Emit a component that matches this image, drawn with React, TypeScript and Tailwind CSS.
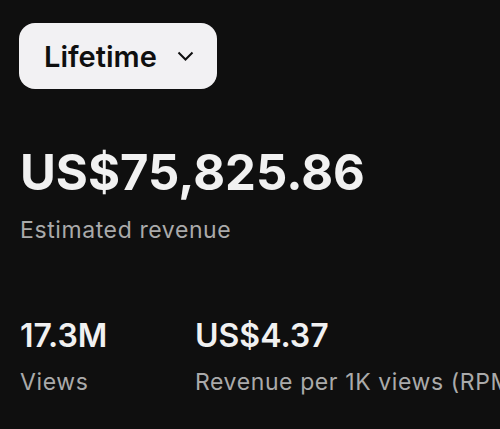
export default function App() {
  return (
    <div
      className="h-[429px] w-[500px] overflow-hidden bg-[#0f0f0f] px-[20px] pt-[23px] text-[#f1f1f1]"
      style={{ fontFamily: 'Inter, "Noto Sans", sans-serif' }}
    >
      <button className="-ml-px flex h-[66px] w-[198px] items-center rounded-[16px] bg-[#f2f1f3] pl-[25px] text-[#0f0f0f]">
        <span className="text-[29px] font-semibold leading-none">Lifetime</span>
        <svg
          className="ml-[20px]"
          width="17"
          height="11"
          viewBox="0 0 17 11"
          fill="none"
          stroke="#0f0f0f"
          strokeWidth="2"
        >
          <path d="M1.5 1.5 8.5 8.5 15.5 1.5" />
        </svg>
      </button>

      <div className="mt-[59px]">
        <div className="text-[49px] font-bold leading-none">US$75,825.86</div>
        <div className="mt-[22px] text-[23px] leading-none tracking-[0.6px] text-[#aaaaaa]">Estimated revenue</div>
      </div>

      <div className="mt-[78px] flex">
        <div className="w-[175px] shrink-0">
          <div className="text-[32px] font-semibold leading-none">17.3M</div>
          <div className="mt-[19px] text-[23px] leading-none tracking-[0.6px] text-[#aaaaaa]">Views</div>
        </div>
        <div className="whitespace-nowrap">
          <div className="text-[32px] font-semibold leading-none">US$4.37</div>
          <div className="mt-[19px] text-[23px] leading-none tracking-[0.6px] text-[#aaaaaa]">Revenue per 1K views (RPM)</div>
        </div>
      </div>
    </div>
  )
}
